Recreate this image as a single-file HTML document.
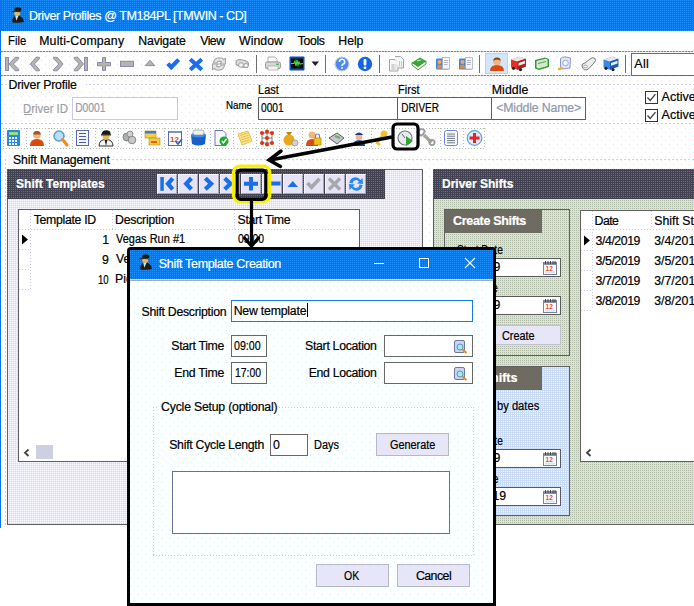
<!DOCTYPE html>
<html><head><meta charset="utf-8">
<style>
*{margin:0;padding:0;box-sizing:border-box}
html,body{width:694px;height:606px;overflow:hidden;font-family:"Liberation Sans",sans-serif;font-size:12px;color:#000}
html{background:#fff}
body{position:relative}
.dots{background:conic-gradient(from 270deg at 1px 1px,#cff2f8 25%,transparent 0) 0 0/8px 8px,conic-gradient(from 270deg at 1px 1px,#cff2f8 25%,transparent 0) 4px 4px/8px 8px,#fff}
.a{position:absolute}
.t{position:absolute;white-space:nowrap;line-height:1;-webkit-text-stroke:0.2px currentColor}
svg{position:absolute;overflow:visible}
</style></head><body>
<div class="a dots" style="left:1px;top:52px;width:693px;height:476px"></div>
<div class="a" style="left:0px;top:0px;width:694px;height:31px;background:conic-gradient(from 270deg at 1px 1px,#1e8ffd 25%,#0a72ef 0) 0 0/2px 2px"></div>
<div class="a" style="left:0px;top:0px;width:1px;height:528px;background:#0a74f0"></div>
<svg style="left:11px;top:7px" width="14" height="17" viewBox="0 0 14 17"><path d="M1.3 15.5 Q0.8 9 6 8.5 Q12.5 9 12.8 15 Q9 16.3 1.3 15.5 Z" fill="#1c1c12"/><path d="M4.2 8.8 L7.5 8.8 L5.3 13.8 Z" fill="#e0e0f0"/><ellipse cx="6.2" cy="6.3" rx="2.9" ry="2.6" fill="#e6b860"/><ellipse cx="6.8" cy="2.6" rx="3.6" ry="2.4" fill="#1e1e16"/><path d="M0.4 4.2 Q4 3 9.8 4.6 L9.8 5.2 Q5 4.6 0.9 5.3 Z" fill="#30302a"/></svg>
<div class="t" style="left:29.00px;top:10.00px;font-size:12.5px;letter-spacing:-0.426px;color:#fff;">Driver Profiles @ TM184PL [TMWIN - CD]</div>
<div class="t" style="left:7.50px;top:35.00px;font-size:12.3px;transform:scaleX(0.9170);transform-origin:1.00px 0;color:#000;">File</div>
<div class="t" style="left:39.20px;top:35.00px;font-size:12.3px;letter-spacing:0.180px;color:#000;">Multi-Company</div>
<div class="t" style="left:138.30px;top:35.00px;font-size:12.3px;letter-spacing:-0.142px;color:#000;">Navigate</div>
<div class="t" style="left:200.20px;top:35.00px;font-size:12.3px;letter-spacing:-0.517px;color:#000;">View</div>
<div class="t" style="left:239.00px;top:35.00px;font-size:12.3px;letter-spacing:0.029px;color:#000;">Window</div>
<div class="t" style="left:297.80px;top:35.00px;font-size:12.3px;letter-spacing:-0.389px;color:#000;">Tools</div>
<div class="t" style="left:338.30px;top:35.00px;font-size:12.3px;letter-spacing:-0.050px;color:#000;">Help</div>
<div class="a" style="left:1px;top:51px;width:693px;height:1px;background:repeating-linear-gradient(90deg,#80808e 0 2px,#d0d0d8 2px 3px)"></div>
<div class="a" style="left:1px;top:75px;width:693px;height:1px;background:repeating-linear-gradient(90deg,#80808e 0 2px,#d0d0d8 2px 3px)"></div>
<div class="a" style="left:256px;top:55px;width:1px;height:18px;background:#6e6e6e"></div>
<div class="a" style="left:325px;top:55px;width:1px;height:18px;background:#6e6e6e"></div>
<div class="a" style="left:379px;top:55px;width:1px;height:18px;background:#6e6e6e"></div>
<div class="a" style="left:479px;top:55px;width:1px;height:18px;background:#6e6e6e"></div>
<div class="a" style="left:625px;top:55px;width:1px;height:18px;background:#6e6e6e"></div>
<svg style="left:0;top:0" width="694" height="100"><g fill="#b6b6a6" stroke="#8a8ab6" stroke-width="1"><rect x="5.5" y="57.5" width="3" height="13"/><path d="M9 64 L15.2 57.3 L18.7 57.3 L18.7 58.8 L13.3 64 L18.7 69.2 L18.7 70.7 L15.2 70.7 Z"/><path d="M30.3 64 L36 57.3 L39.4 57.3 L39.4 58.8 L34.3 64 L39.4 69.6 L39.4 70.8 L36 70.8 Z"/><path d="M63 64 L57.3 57.3 L53.6 57.3 L53.6 58.8 L58.8 64 L53.6 69.6 L53.6 70.8 L57.3 70.8 Z"/><path d="M83.5 64 L77.8 57.3 L74.3 57.3 L74.3 58.8 L79.3 64 L74.3 69.6 L74.3 70.8 L77.8 70.8 Z"/><rect x="84.5" y="57.5" width="3" height="13"/><path d="M102.5 57.5 H105.5 V62.5 H110.5 V65.8 H105.5 V70.5 H102.5 V65.8 H97.5 V62.5 H102.5 Z"/><rect x="120.5" y="61.3" width="13" height="5.2"/><path d="M145.3 65.6 L150 60.2 L154.7 65.6 Z"/></g></svg>
<svg style="left:0;top:0" width="694" height="100"><path d="M167.8 63.6 L171.3 67.3 L178.6 59.6" stroke="#1c6eee" stroke-width="4.2" fill="none"/><path d="M190.2 59.2 L201.8 69.8 M201.8 59.2 L190.2 69.8" stroke="#1c6eee" stroke-width="4"/></svg>
<svg style="left:0;top:0" width="694" height="100"><path d="M213.5 63 Q214 58 219.5 57.8 Q222.5 57.8 223.5 59.5 L225.5 58.5 L225.5 64 L219.8 64 L221.5 62 Q220 60.8 218.5 61.2 Q217 62 217 63 Z" fill="#e4e4ee" stroke="#a4a49a" stroke-width="1.1"/><path d="M224.5 65 Q224 70 218.5 70.2 Q215.5 70.2 214.5 68.5 L212.5 69.5 L212.5 64 L218.2 64 L216.5 66 Q218 67.2 219.5 66.8 Q221 66 221 65 Z" fill="#e4e4ee" stroke="#a4a49a" stroke-width="1.1"/><path d="M236 62.5 Q236 59.5 240 59.5 L245 60.5 Q249 62 248.5 65 Q247.5 68 244 67.5 L239 66 Q235.5 65 236 62.5 Z" fill="#dcdce6" stroke="#a0a098" stroke-width="1.1"/><ellipse cx="241" cy="65" rx="2.5" ry="2.2" fill="#f4f4f8" stroke="#9c9c94" stroke-width="0.9"/><ellipse cx="246" cy="65.5" rx="2.3" ry="2" fill="#f4f4f8" stroke="#9c9c94" stroke-width="0.9"/></svg>
<svg style="left:265px;top:56px;" width="16" height="15" viewBox="0 0 16 15"><path d="M3 1 H10 L12 3 V6 H3 Z" fill="#fff" stroke="#9a9a9a" stroke-width="0.8"/><rect x="0.5" y="6" width="15" height="6.5" rx="1.5" fill="#d8d8d8" stroke="#8a8a8a" stroke-width="0.8"/><rect x="3" y="10" width="10" height="4" fill="#f4f4f4" stroke="#9a9a9a" stroke-width="0.6"/><rect x="11" y="7.5" width="3" height="1.5" fill="#5fb45f"/></svg>
<svg style="left:289px;top:56px;" width="16" height="15" viewBox="0 0 16 15"><rect x="0.5" y="0.5" width="15" height="14" fill="#0e4fb0" rx="1"/><rect x="2" y="2.5" width="12" height="10" fill="#050a05"/><path d="M2 7.5 L5 7.5 L6 5 L7 10 L8 4 L9 9 L10 6 L11 8 L14 7.5" stroke="#3be03b" stroke-width="1.2" fill="none"/></svg>
<svg style="left:311px;top:61px;" width="9" height="6" viewBox="0 0 9 6"><path d="M0.5 0.5 H8 L4.25 5 Z" fill="#202020"/></svg>
<svg style="left:334px;top:56px;" width="40" height="16" viewBox="0 0 40 16"><circle cx="8" cy="8" r="7" fill="#4a8ae8" stroke="#c8d0e0" stroke-width="1.2"/><path d="M5.5 6 A2.6 2.6 0 1 1 8.8 8.3 Q8 8.8 8 10" stroke="#fff" stroke-width="1.6" fill="none"/><circle cx="8" cy="12" r="0.9" fill="#fff"/><circle cx="31" cy="8" r="7.2" fill="#1565e0"/><rect x="29.6" y="3" width="2.8" height="6.5" rx="1" fill="#fff"/><circle cx="31" cy="11.8" r="1.4" fill="#fff"/></svg>
<svg style="left:0;top:0" width="694" height="100"><path d="M389.5 59.5 H395 L398 62.5 V71 H389.5 Z" fill="#f8f8f8" stroke="#9a9aa4" stroke-width="0.9"/><path d="M395 56.5 H400.5 L403.5 59.5 V68 H398" fill="#f4f4f4" stroke="#9a9aa4" stroke-width="0.9"/><path d="M391 65 H396.5 M391 67 H396.5 M391 69 H396.5 M393 64 V70" stroke="#b0b0b8" stroke-width="0.6"/><path d="M399.5 61 V66.5 M401.5 61 V66.5" stroke="#a8a8b0" stroke-width="0.6"/><path d="M412 62.5 L420 57.5 L426 61 L418 66.5 Z" fill="#38a838"/><path d="M412 62.5 L412 65 L418 69.8 L426 64 L426 61 L418 66.5 Z" fill="#f4f4f0" stroke="#208020" stroke-width="0.8"/><path d="M417 61 L421 60" stroke="#c8f0c8" stroke-width="1"/><g transform="translate(435.5,0)"><rect x="0.5" y="58.5" width="13" height="11" rx="1" fill="#3a88e6"/><rect x="7" y="57.5" width="7" height="11.5" fill="#f4f6fa" stroke="#a0a8b8" stroke-width="0.7"/><path d="M8.5 60.5 H12.5 M8.5 62.5 H12.5 M8.5 64.5 H12" stroke="#9098a8" stroke-width="0.7"/><circle cx="4" cy="62" r="2" fill="#f4a868"/><path d="M1.2 68.5 Q1.5 64.5 4 64.5 Q6.5 64.5 6.8 68.5 Z" fill="#f08830"/></g><g transform="translate(458.5,0)"><rect x="0.5" y="58.5" width="13" height="11" rx="1" fill="#3a88e6"/><rect x="7" y="57.5" width="7" height="11.5" fill="#f4f6fa" stroke="#a0a8b8" stroke-width="0.7"/><path d="M8.5 60.5 H12.5 M8.5 62.5 H12.5 M8.5 64.5 H12" stroke="#9098a8" stroke-width="0.7"/><circle cx="4" cy="62" r="2" fill="#f4a868"/><path d="M1.2 68.5 Q1.5 64.5 4 64.5 Q6.5 64.5 6.8 68.5 Z" fill="#f08830"/></g></svg>
<div class="a" style="left:485px;top:53px;width:23px;height:21px;background:#cfe6fb;border:1px solid #b4d4f4"></div>
<svg style="left:489px;top:56px;" width="16" height="16" viewBox="0 0 16 16"><path d="M1 15 Q1 9 8 9 Q15 9 15 15 Z" fill="#d84a10"/><circle cx="8" cy="5.5" r="3.8" fill="#f2b47c"/><path d="M4.2 5 Q4.5 1.5 8 1.6 Q11.5 1.5 11.8 5 Q10 3.6 8 3.8 Q6 3.6 4.2 5 Z" fill="#8a4a1a"/></svg>
<svg style="left:0;top:0" width="694" height="100"><g transform="translate(510.5,0)"><path d="M0.5 59.5 L9 56.8 L15.3 58.8 L15.3 66.5 L7 69.8 L0.5 67.5 Z" fill="#e03028"/><path d="M0.5 59.5 L9 56.8 L15.3 58.8 L7 61.5 Z" fill="#e8e8ea"/><path d="M7 61.5 L15.3 58.8 L15.3 66.5 L7 69.8 Z" fill="#b81a14"/><path d="M8 63 L14.5 60.8 L14.5 63.5 L8 65.8 Z" fill="#e8eef8"/><circle cx="3" cy="68.3" r="1.6" fill="#222"/><circle cx="10" cy="69.6" r="1.6" fill="#222"/></g><path d="M535 60 L545 57.5 L549 59 L549 67 L539 70 L535 68.5 Z" fill="#30a030"/><path d="M536.5 61 L545.5 58.8 L547.5 59.6 L547.5 66 L538.5 68.5 L536.5 67.5 Z" fill="#d8e8d0"/><path d="M538 63.5 L546 61.5" stroke="#60a060" stroke-width="1.2"/><path d="M560.5 58.5 Q562 56.5 566 57 L570.5 58 L570 68 L562 69 L560.5 67 Z" fill="#e0e6fa" stroke="#8090c8" stroke-width="0.9"/><circle cx="565.5" cy="63" r="2.8" fill="#f4f6ff" stroke="#8a9ad0" stroke-width="0.8"/><path d="M558.5 69.5 L563 68" stroke="#e8a020" stroke-width="1.8"/><circle cx="559" cy="69" r="1.3" fill="#f0b030"/><path d="M582 66 Q581.5 63.5 585 63 L590 59 Q593 56.5 595 58.5 Q596.5 60.5 594 63 L589 68.5 Q587 70.5 584.5 69.8 Q582.5 69 582 66 Z" fill="#ececec" stroke="#7a7a7a" stroke-width="1"/><ellipse cx="585.5" cy="66.5" rx="1.8" ry="1.3" fill="#fff" stroke="#888" stroke-width="0.7"/><g transform="translate(603,0)"><path d="M0.5 59.5 L9 56.8 L15.3 58.8 L15.3 66.5 L7 69.8 L0.5 67.5 Z" fill="#3a86e0"/><path d="M0.5 59.5 L9 56.8 L15.3 58.8 L7 61.5 Z" fill="#e8e8ea"/><path d="M7 61.5 L15.3 58.8 L15.3 66.5 L7 69.8 Z" fill="#1a5ab8"/><path d="M8 63 L14.5 60.8 L14.5 63.5 L8 65.8 Z" fill="#e8eef8"/><circle cx="3" cy="68.3" r="1.6" fill="#222"/><circle cx="10" cy="69.6" r="1.6" fill="#222"/></g></svg>
<div class="a" style="left:631px;top:53px;width:70px;height:23px;background:#fff;border:1px solid #6a6a6a"></div>
<div class="t" style="left:634.30px;top:58.00px;font-size:12.5px;letter-spacing:0.293px;color:#000;">All</div>
<div class="a" style="left:1px;top:84px;width:693px;height:1px;background:repeating-linear-gradient(90deg,#cdcdf4 0 2px,transparent 2px 4px)"></div>
<div class="a" style="left:1px;top:123px;width:693px;height:1px;background:repeating-linear-gradient(90deg,#cdcdf4 0 2px,transparent 2px 4px)"></div>
<div class="a" style="left:6px;top:76px;width:80px;height:14px;background:#fff"></div>
<div class="t" style="left:8.50px;top:79.00px;font-size:12.3px;letter-spacing:-0.209px;color:#000;">Driver Profile</div>
<div class="t" style="left:23.20px;top:103.00px;font-size:12.3px;transform:scaleX(0.9260);transform-origin:1.00px 0;color:#a0a0a0;">Driver ID</div>
<div class="a" style="left:24px;top:114px;width:8px;height:1px;background:#a0a0a0"></div>
<div class="a" style="left:72px;top:97px;width:106px;height:23px;background:#fff;border:1px solid #c8c8ee"></div>
<div class="t" style="left:74.80px;top:102.00px;font-size:12.3px;transform:scaleX(0.8390);transform-origin:1.00px 0;color:#9a9aa8;">D0001</div>
<div class="t" style="left:225.50px;top:100.00px;font-size:11.3px;transform:scaleX(0.8643);transform-origin:0.00px 0;color:#000;">Name</div>
<div class="t" style="left:257.60px;top:84.00px;font-size:12.3px;transform:scaleX(0.8937);transform-origin:1.00px 0;color:#000;">Last</div>
<div class="t" style="left:397.70px;top:84.00px;font-size:12.3px;transform:scaleX(0.8984);transform-origin:1.00px 0;color:#000;">First</div>
<div class="t" style="left:491.80px;top:84.00px;font-size:12.3px;letter-spacing:0.083px;color:#000;">Middle</div>
<div class="a" style="left:258px;top:97px;width:140px;height:23px;background:#fff;border:1px solid #5e5e5e"></div>
<div class="a" style="left:397px;top:97px;width:95px;height:23px;background:#fff;border:1px solid #5e5e5e"></div>
<div class="a" style="left:491px;top:97px;width:95px;height:23px;background:#fff;border:1px solid #5e5e5e"></div>
<div class="t" style="left:261.40px;top:102.00px;font-size:12.3px;transform:scaleX(0.8286);transform-origin:0.00px 0;color:#000;">0001</div>
<div class="t" style="left:400.80px;top:102.00px;font-size:12.3px;transform:scaleX(0.8117);transform-origin:1.00px 0;color:#000;">DRIVER</div>
<div class="t" style="left:496.20px;top:102.00px;font-size:12.3px;letter-spacing:-0.152px;color:#8c98ac;">&lt;Middle Name&gt;</div>
<div class="a" style="left:645px;top:91px;width:13px;height:13px;background:#fff;border:1px solid #333"></div>
<svg style="left:645px;top:91px;" width="13" height="13" viewBox="0 0 13 13"><path d="M2.5 6.5 L5.2 9.5 L10.5 3.2" stroke="#404048" stroke-width="1.3" fill="none"/></svg>
<div class="a" style="left:645px;top:109px;width:13px;height:13px;background:#fff;border:1px solid #333"></div>
<svg style="left:645px;top:109px;" width="13" height="13" viewBox="0 0 13 13"><path d="M2.5 6.5 L5.2 9.5 L10.5 3.2" stroke="#404048" stroke-width="1.3" fill="none"/></svg>
<div class="t" style="left:661.60px;top:91.00px;font-size:12.5px;color:#000;">Active</div>
<div class="t" style="left:661.60px;top:109.00px;font-size:12.5px;color:#000;">Active</div>
<div class="a" style="left:3px;top:128px;width:481px;height:1px;background:repeating-linear-gradient(90deg,#b4c0b4 0 1px,transparent 1px 3px)"></div>
<div class="a" style="left:3px;top:148px;width:481px;height:1px;background:repeating-linear-gradient(90deg,#b4c0b4 0 1px,transparent 1px 3px)"></div>
<div class="a" style="left:3px;top:128px;width:1px;height:21px;background:repeating-linear-gradient(180deg,#b4c0b4 0 1px,transparent 1px 3px)"></div>
<div class="a" style="left:26px;top:128px;width:1px;height:21px;background:repeating-linear-gradient(180deg,#b4c0b4 0 1px,transparent 1px 3px)"></div>
<div class="a" style="left:49px;top:128px;width:1px;height:21px;background:repeating-linear-gradient(180deg,#b4c0b4 0 1px,transparent 1px 3px)"></div>
<div class="a" style="left:72px;top:128px;width:1px;height:21px;background:repeating-linear-gradient(180deg,#b4c0b4 0 1px,transparent 1px 3px)"></div>
<div class="a" style="left:95px;top:128px;width:1px;height:21px;background:repeating-linear-gradient(180deg,#b4c0b4 0 1px,transparent 1px 3px)"></div>
<div class="a" style="left:118px;top:128px;width:1px;height:21px;background:repeating-linear-gradient(180deg,#b4c0b4 0 1px,transparent 1px 3px)"></div>
<div class="a" style="left:141px;top:128px;width:1px;height:21px;background:repeating-linear-gradient(180deg,#b4c0b4 0 1px,transparent 1px 3px)"></div>
<div class="a" style="left:164px;top:128px;width:1px;height:21px;background:repeating-linear-gradient(180deg,#b4c0b4 0 1px,transparent 1px 3px)"></div>
<div class="a" style="left:187px;top:128px;width:1px;height:21px;background:repeating-linear-gradient(180deg,#b4c0b4 0 1px,transparent 1px 3px)"></div>
<div class="a" style="left:210px;top:128px;width:1px;height:21px;background:repeating-linear-gradient(180deg,#b4c0b4 0 1px,transparent 1px 3px)"></div>
<div class="a" style="left:233px;top:128px;width:1px;height:21px;background:repeating-linear-gradient(180deg,#b4c0b4 0 1px,transparent 1px 3px)"></div>
<div class="a" style="left:256px;top:128px;width:1px;height:21px;background:repeating-linear-gradient(180deg,#b4c0b4 0 1px,transparent 1px 3px)"></div>
<div class="a" style="left:279px;top:128px;width:1px;height:21px;background:repeating-linear-gradient(180deg,#b4c0b4 0 1px,transparent 1px 3px)"></div>
<div class="a" style="left:302px;top:128px;width:1px;height:21px;background:repeating-linear-gradient(180deg,#b4c0b4 0 1px,transparent 1px 3px)"></div>
<div class="a" style="left:325px;top:128px;width:1px;height:21px;background:repeating-linear-gradient(180deg,#b4c0b4 0 1px,transparent 1px 3px)"></div>
<div class="a" style="left:348px;top:128px;width:1px;height:21px;background:repeating-linear-gradient(180deg,#b4c0b4 0 1px,transparent 1px 3px)"></div>
<div class="a" style="left:371px;top:128px;width:1px;height:21px;background:repeating-linear-gradient(180deg,#b4c0b4 0 1px,transparent 1px 3px)"></div>
<div class="a" style="left:394px;top:128px;width:1px;height:21px;background:repeating-linear-gradient(180deg,#b4c0b4 0 1px,transparent 1px 3px)"></div>
<div class="a" style="left:417px;top:128px;width:1px;height:21px;background:repeating-linear-gradient(180deg,#b4c0b4 0 1px,transparent 1px 3px)"></div>
<div class="a" style="left:440px;top:128px;width:1px;height:21px;background:repeating-linear-gradient(180deg,#b4c0b4 0 1px,transparent 1px 3px)"></div>
<div class="a" style="left:463px;top:128px;width:1px;height:21px;background:repeating-linear-gradient(180deg,#b4c0b4 0 1px,transparent 1px 3px)"></div>
<div class="a" style="left:484px;top:128px;width:1px;height:21px;background:repeating-linear-gradient(180deg,#b4c0b4 0 1px,transparent 1px 3px)"></div>
<svg style="left:0;top:0" width="694" height="606"><rect x="7" y="130" width="13" height="16" rx="1" fill="#2a88e0"/><rect x="9" y="132" width="9" height="3" fill="#9ae070"/><rect x="9" y="137" width="2" height="2" fill="#e8f4ff"/><rect x="12" y="137" width="2" height="2" fill="#e8f4ff"/><rect x="15" y="137" width="2" height="2" fill="#e8f4ff"/><rect x="9" y="140" width="2" height="2" fill="#e8f4ff"/><rect x="12" y="140" width="2" height="2" fill="#e8f4ff"/><rect x="15" y="140" width="2" height="2" fill="#e8f4ff"/><rect x="9" y="143" width="2" height="2" fill="#e8f4ff"/><rect x="12" y="143" width="2" height="2" fill="#e8f4ff"/><rect x="15" y="143" width="2" height="2" fill="#e8f4ff"/><path d="M30 146 Q30 139 37 139 Q44 139 44 146 Z" fill="#d84a10"/><circle cx="37" cy="135" r="3.8" fill="#f2b47c"/><path d="M33.2 134.5 Q33.5 131 37 131.1 Q40.5 131 40.8 134.5 Z" fill="#9a5a2a"/><circle cx="59" cy="136" r="5" fill="#b8e0f8" stroke="#5a9ad8" stroke-width="1.5"/><path d="M62.5 139.5 L67 145" stroke="#f08a20" stroke-width="3" stroke-linecap="round"/><rect x="76.5" y="130.5" width="12" height="15" fill="#f4f6fc" stroke="#5a6ab0" stroke-width="1"/><rect x="79" y="133" width="7" height="1" fill="#4a5aa0"/><rect x="79" y="136" width="7" height="1" fill="#4a5aa0"/><rect x="79" y="139" width="7" height="1" fill="#4a5aa0"/><rect x="79" y="142" width="7" height="1" fill="#4a5aa0"/><path d="M99 146 Q99 139.5 106 139.5 Q113 139.5 113 146 Z" fill="#f4f4f4" stroke="#303030" stroke-width="1"/><path d="M104.5 139.5 L106 146 L107.5 139.5 Z" fill="#202020"/><ellipse cx="106" cy="136.5" rx="3.4" ry="3.6" fill="#e8b858"/><path d="M101.5 134.5 Q102 130 107 130.3 Q111 130.8 110.5 134.5 Z" fill="#1a1a14"/><rect x="101" y="134" width="10" height="1.5" fill="#3a3a30"/><circle cx="127" cy="137" r="4" fill="#b0b0b0" stroke="#707070" stroke-width="0.8"/><circle cx="132" cy="140" r="3.8" fill="#c8c8c8" stroke="#707070" stroke-width="0.8"/><circle cx="130" cy="134" r="3" fill="#d0d0d0" stroke="#808080" stroke-width="0.8"/><rect x="145" y="131" width="11" height="7" fill="#f8d040" stroke="#b08a20" stroke-width="0.6"/><rect x="145" y="131" width="11" height="2.5" fill="#3a7ad8"/><rect x="149" y="138" width="11" height="7" fill="#f8c848" stroke="#b08a20" stroke-width="0.6"/><rect x="151" y="141" width="6" height="2" fill="#e86020"/><rect x="168.5" y="131.5" width="13" height="14" fill="#fff" stroke="#5a6ab0" stroke-width="1"/><rect x="169" y="131" width="12" height="2" fill="#8090c0"/><text x="170" y="142" font-size="8" font-weight="bold" fill="#e84010" font-family="Liberation Sans">12</text><path d="M176 142 L178 144 L182 139" stroke="#2060c0" stroke-width="1.6" fill="none"/><path d="M191 135 L206 135 L205 144 Q198.5 147 192 144 Z" fill="#1860c8"/><ellipse cx="198.5" cy="135" rx="7.5" ry="2.5" fill="#3a90e8"/><rect x="193" y="130" width="11" height="5" rx="2" fill="#f0f0f0" stroke="#888" stroke-width="0.6"/><path d="M215 130.5 H223 L226 133.5 V145.5 H215 Z" fill="#f8f8fc" stroke="#5a6ab0" stroke-width="0.9"/><circle cx="224" cy="141" r="4.5" fill="#20a830"/><path d="M221.8 141 L223.5 142.8 L226.5 139" stroke="#fff" stroke-width="1.5" fill="none"/><path d="M238 134 L248 131 L252 141 L242 145 Z" fill="#fce890" stroke="#e8b830" stroke-width="0.9"/><path d="M240.0 135.5 L248.0 133.0" stroke="#e0a820" stroke-width="0.7"/><path d="M240.6 137.7 L248.6 135.2" stroke="#e0a820" stroke-width="0.7"/><path d="M241.2 139.9 L249.2 137.4" stroke="#e0a820" stroke-width="0.7"/><path d="M241.8 142.1 L249.8 139.6" stroke="#e0a820" stroke-width="0.7"/><path d="M262 133 L272 133 L272 143 L262 143 Z M267 131 L267 145 M262 138 L272 138" stroke="#707070" stroke-width="0.9" fill="none"/><circle cx="262" cy="133" r="2" fill="#e03010"/><circle cx="272" cy="133" r="2" fill="#e03010"/><circle cx="262" cy="143" r="2" fill="#e03010"/><circle cx="272" cy="143" r="2" fill="#e03010"/><circle cx="267" cy="131.5" r="2" fill="#e03010"/><circle cx="267" cy="138" r="2" fill="#e03010"/><circle cx="267" cy="144.5" r="2" fill="#e03010"/><circle cx="289" cy="140" r="5.5" fill="#e8a818"/><path d="M286 132 L292 132 L290 135 L288 135 Z" fill="#c88808"/><circle cx="295" cy="143" r="3" fill="#d0d0d0" stroke="#909090" stroke-width="0.7"/><path d="M306 146 Q306 139 312 139 Q318 139 318 146 Z" fill="#d84a10"/><circle cx="312" cy="135" r="3.5" fill="#f2b47c"/><rect x="314" y="138" width="7" height="7" fill="#f0c020" stroke="#b08810" stroke-width="0.7"/><path d="M315.5 138 V136 A2 2 0 0 1 319.5 136 V138" stroke="#808080" stroke-width="1.2" fill="none"/><path d="M329 138 L337 133 L344 138 L337 144 Z" fill="#c8c8c8" stroke="#606060" stroke-width="1"/><path d="M335 136 L340 138" stroke="#60b060" stroke-width="2"/><path d="M353 146 Q353 140 359 140 Q365 140 365 146 Z" fill="#1a48b0"/><circle cx="359" cy="137" r="3.3" fill="#f0b880"/><path d="M354.5 135 Q359 130 363.5 135 Z" fill="#1a3a90"/><circle cx="384" cy="134" r="3.5" fill="#f0c030"/><path d="M382 136 L377 143 L380 145" stroke="#f0c030" stroke-width="2.4" fill="none"/><circle cx="405" cy="138" r="7" fill="#e8eaf0" stroke="#707880" stroke-width="1.2"/><path d="M405 138 L402 134" stroke="#606870" stroke-width="1"/><path d="M406 136 L413 141 L406 146 Z" fill="#30a830"/><path d="M424 135 L431.5 142.5" stroke="#a4a49c" stroke-width="3.2"/><path d="M424.8 131.5 A3.2 3.2 0 1 0 421 135.5 L423 134.5 L424 132.5 Z" fill="none" stroke="#9a9aa8" stroke-width="1.8"/><circle cx="432" cy="142.5" r="2.6" fill="none" stroke="#9a9aa0" stroke-width="1.8"/><rect x="444.5" y="130.5" width="13" height="15" rx="2" fill="#f8faff" stroke="#6a88d8" stroke-width="1"/><rect x="447" y="133.5" width="8" height="1" fill="#707888"/><rect x="447" y="135.7" width="8" height="1" fill="#707888"/><rect x="447" y="137.9" width="8" height="1" fill="#707888"/><rect x="447" y="140.1" width="8" height="1" fill="#707888"/><rect x="447" y="142.3" width="8" height="1" fill="#707888"/><circle cx="474.5" cy="138" r="7.3" fill="#d8ecfc" stroke="#60a0e0" stroke-width="1.2"/><path d="M473 133 H476 V136.5 H479.5 V139.5 H476 V143 H473 V139.5 H469.5 V136.5 H473 Z" fill="#e82020"/></svg>
<div class="t" style="left:13.00px;top:154.00px;font-size:12.3px;letter-spacing:-0.199px;color:#000;">Shift Management</div>
<div class="a" style="left:112px;top:159px;width:582px;height:1px;background:repeating-linear-gradient(90deg,#cdcdf4 0 2px,transparent 2px 4px)"></div>
<div class="a" style="left:5px;top:159px;width:1px;height:366px;background:repeating-linear-gradient(180deg,#cdcdf4 0 2px,transparent 2px 4px)"></div>
<div class="a" style="left:7px;top:169px;width:416px;height:356px;background:conic-gradient(from 0deg at 1px 1px,#d6f8fc 0 25%,#dad2f8 0 50%,#d6f8fc 0 75%,#f6f6ff 0) 0 0/2px 2px;border:1px solid #606060"></div>
<div class="a" style="left:7px;top:169px;width:378px;height:30px;background:conic-gradient(from 270deg at 1px 1px,#707052 25%,#424252 0) 0 0/2px 2px"></div>
<div class="t" style="left:16.10px;top:178.00px;font-size:12px;font-weight:bold;color:#fff;">Shift Templates</div>
<div class="a" style="left:157px;top:174px;width:20px;height:20px;background:#e4e4f6;border:1px solid #f4f4ff;border-right-color:#a8a8b8;border-bottom-color:#a8a8b8"></div>
<div class="a" style="left:178px;top:174px;width:20px;height:20px;background:#e4e4f6;border:1px solid #f4f4ff;border-right-color:#a8a8b8;border-bottom-color:#a8a8b8"></div>
<div class="a" style="left:199px;top:174px;width:20px;height:20px;background:#e4e4f6;border:1px solid #f4f4ff;border-right-color:#a8a8b8;border-bottom-color:#a8a8b8"></div>
<div class="a" style="left:220px;top:174px;width:20px;height:20px;background:#e4e4f6;border:1px solid #f4f4ff;border-right-color:#a8a8b8;border-bottom-color:#a8a8b8"></div>
<div class="a" style="left:241px;top:174px;width:20px;height:20px;background:#e4e4f6;border:1px solid #f4f4ff;border-right-color:#a8a8b8;border-bottom-color:#a8a8b8"></div>
<div class="a" style="left:262px;top:174px;width:20px;height:20px;background:#e4e4f6;border:1px solid #f4f4ff;border-right-color:#a8a8b8;border-bottom-color:#a8a8b8"></div>
<div class="a" style="left:283px;top:174px;width:20px;height:20px;background:#e4e4f6;border:1px solid #f4f4ff;border-right-color:#a8a8b8;border-bottom-color:#a8a8b8"></div>
<div class="a" style="left:304px;top:174px;width:20px;height:20px;background:#e4e4f6;border:1px solid #f4f4ff;border-right-color:#a8a8b8;border-bottom-color:#a8a8b8"></div>
<div class="a" style="left:325px;top:174px;width:20px;height:20px;background:#e4e4f6;border:1px solid #f4f4ff;border-right-color:#a8a8b8;border-bottom-color:#a8a8b8"></div>
<div class="a" style="left:346px;top:174px;width:20px;height:20px;background:#e4e4f6;border:1px solid #f4f4ff;border-right-color:#a8a8b8;border-bottom-color:#a8a8b8"></div>
<svg style="left:0;top:0" width="694" height="606"><g fill="#1a6ee8"><rect x="160.3" y="177" width="3.5" height="13.8"/><path d="M172.7 178.3 L168.0 183.8 L172.7 189.3" stroke="#1a6ee8" stroke-width="4.2" fill="none"/><path d="M191.4 178.3 L186.2 183.8 L191.4 189.3" stroke="#1a6ee8" stroke-width="4.2" fill="none"/><path d="M205.3 178.3 L211.1 183.8 L205.3 189.3" stroke="#1a6ee8" stroke-width="4.2" fill="none"/><path d="M224.7 178.3 L230.5 183.8 L224.7 189.3" stroke="#1a6ee8" stroke-width="4.2" fill="none"/><path d="M249 177 H253 V181.8 H258 V185.8 H253 V190.6 H249 V185.8 H244 V181.8 H249 Z"/><rect x="270.5" y="181.5" width="10" height="4"/><path d="M287.5 187 L292.8 181 L298 187 Z"/></g><path d="M307.5 183 L311.5 187.3 L319.5 178.8" stroke="#a8a8ac" stroke-width="3.6" fill="none"/><path d="M329 178.5 L340 189.5 M340 178.5 L329 189.5" stroke="#a8a8ac" stroke-width="3.4" fill="none"/><path d="M349.5 183 A6 6 0 0 1 360.5 180 L362.5 178 L363 184 L357 183.5 L359 181.8 A3.5 3.5 0 0 0 352.5 183.5 Z" fill="#2a8ae8"/><path d="M362.5 185 A6 6 0 0 1 351.5 188 L349.5 190 L349 184 L355 184.5 L353 186.2 A3.5 3.5 0 0 0 359.5 184.5 Z" fill="#2a8ae8"/></svg>
<div class="a" style="left:18px;top:209px;width:342px;height:253px;background:#fff;border:1px solid #606060"></div>
<div class="a" style="left:19px;top:229px;width:340px;height:1px;background:repeating-linear-gradient(90deg,#c8c8f0 0 1px,transparent 1px 3px)"></div>
<div class="a" style="left:19px;top:249px;width:11px;height:1px;background:repeating-linear-gradient(90deg,#c8c8f0 0 1px,transparent 1px 3px)"></div>
<div class="a" style="left:19px;top:269px;width:11px;height:1px;background:repeating-linear-gradient(90deg,#c8c8f0 0 1px,transparent 1px 3px)"></div>
<div class="a" style="left:19px;top:289px;width:11px;height:1px;background:repeating-linear-gradient(90deg,#c8c8f0 0 1px,transparent 1px 3px)"></div>
<div class="a" style="left:30px;top:210px;width:1px;height:80px;background:repeating-linear-gradient(180deg,#c8c8f0 0 1px,transparent 1px 3px)"></div>
<div class="a" style="left:112px;top:210px;width:1px;height:19px;background:repeating-linear-gradient(180deg,#c8c8f0 0 1px,transparent 1px 3px)"></div>
<div class="a" style="left:234px;top:210px;width:1px;height:19px;background:repeating-linear-gradient(180deg,#c8c8f0 0 1px,transparent 1px 3px)"></div>
<div class="t" style="left:33.70px;top:214.00px;font-size:12.3px;letter-spacing:-0.313px;color:#000;">Template ID</div>
<div class="t" style="left:115.00px;top:214.00px;font-size:12.3px;letter-spacing:-0.227px;color:#000;">Description</div>
<div class="t" style="left:237.50px;top:214.00px;font-size:12.3px;letter-spacing:-0.324px;color:#000;">Start Time</div>
<svg style="left:21px;top:234px;" width="8" height="12" viewBox="0 0 8 12"><path d="M1 0.5 L7 5.5 L1 10.5 Z" fill="#000"/></svg>
<div class="t" style="left:102.20px;top:234.00px;font-size:12.3px;color:#000;">1</div>
<div class="t" style="left:102.00px;top:254.00px;font-size:12.3px;color:#000;">9</div>
<div class="t" style="left:98.20px;top:274.00px;font-size:12.3px;transform:scaleX(0.7804);transform-origin:0.00px 0;color:#000;">10</div>
<div class="t" style="left:116.00px;top:233.00px;font-size:12.3px;transform:scaleX(0.8951);transform-origin:0.00px 0;color:#000;">Vegas Run #1</div>
<div class="t" style="left:116.00px;top:253.00px;font-size:12.3px;color:#000;">Vegas</div>
<div class="t" style="left:115.00px;top:273.00px;font-size:12.3px;color:#000;">Pickup</div>
<div class="t" style="left:237.50px;top:233.00px;font-size:12.3px;transform:scaleX(0.8470);transform-origin:0.00px 0;color:#000;">09:00</div>
<svg style="left:23px;top:449px;" width="8" height="8" viewBox="0 0 8 8"><path d="M5.5 0.5 L2 3.7 L5.5 7" stroke="#404040" stroke-width="1.8" fill="none"/></svg>
<div class="a" style="left:36px;top:445px;width:17px;height:14px;background:#cdd0e2"></div>
<div class="a" style="left:433px;top:169px;width:262px;height:356px;background:conic-gradient(from 270deg at 1px 1px,#b0bca8 25%,#dcdaf8 0) 0 0/2px 2px;border:1px solid #606060;border-right:none"></div>
<div class="a" style="left:433px;top:169px;width:261px;height:30px;background:conic-gradient(from 270deg at 1px 1px,#707052 25%,#424252 0) 0 0/2px 2px"></div>
<div class="t" style="left:442.00px;top:178.00px;font-size:12px;font-weight:bold;color:#fff;">Driver Shifts</div>
<div class="a" style="left:444px;top:209px;width:126px;height:147px;border:1px solid #606060"></div>
<div class="a" style="left:445px;top:210px;width:97px;height:23px;background:#6e6c62"></div>
<div class="t" style="left:453.10px;top:215.00px;font-size:12.5px;font-weight:bold;letter-spacing:-0.329px;color:#fff;">Create Shifts</div>
<div class="t" style="left:456.50px;top:244.00px;font-size:12.3px;transform:scaleX(0.8285);transform-origin:0.00px 0;color:#000;">Start Date</div>
<div class="a" style="left:452px;top:258px;width:109px;height:19px;background:#fff;border:1px solid #5a5a5a"></div>
<div class="t" style="left:452.47px;top:261.00px;font-size:12.3px;color:#000;">3/4/2019</div>
<div class="t" style="left:455.50px;top:282.00px;font-size:12.3px;transform:scaleX(0.8130);transform-origin:1.00px 0;color:#000;">End Date</div>
<div class="a" style="left:452px;top:296px;width:109px;height:19px;background:#fff;border:1px solid #5a5a5a"></div>
<div class="t" style="left:452.47px;top:299.00px;font-size:12.3px;color:#000;">3/8/2019</div>
<div class="a" style="left:452px;top:325px;width:109px;height:20px;background:#e6e6f8;border:1px solid #c0c0d0"></div>
<div class="t" style="left:501.80px;top:330.00px;font-size:12.3px;transform:scaleX(0.8848);transform-origin:0.00px 0;color:#000;">Create</div>
<svg style="left:543px;top:261px" width="14" height="14" viewBox="0 0 14 14"><rect x="0.5" y="1.5" width="13" height="12" fill="#fff" stroke="#7a80a0" stroke-width="1"/><rect x="1" y="1" width="12" height="3" fill="#8a90a0"/><path d="M2.5 0 V3 M5 0 V3 M7.5 0 V3 M10 0 V3 M12 0 V3" stroke="#303840" stroke-width="0.9"/><text x="2.6" y="10" font-size="6.5" font-weight="bold" fill="#f04a10" font-family="Liberation Sans">12</text><rect x="2" y="10.5" width="10" height="2" fill="#c8ecf8"/></svg>
<svg style="left:543px;top:299px" width="14" height="14" viewBox="0 0 14 14"><rect x="0.5" y="1.5" width="13" height="12" fill="#fff" stroke="#7a80a0" stroke-width="1"/><rect x="1" y="1" width="12" height="3" fill="#8a90a0"/><path d="M2.5 0 V3 M5 0 V3 M7.5 0 V3 M10 0 V3 M12 0 V3" stroke="#303840" stroke-width="0.9"/><text x="2.6" y="10" font-size="6.5" font-weight="bold" fill="#f04a10" font-family="Liberation Sans">12</text><rect x="2" y="10.5" width="10" height="2" fill="#c8ecf8"/></svg>
<div class="a" style="left:444px;top:366px;width:126px;height:150px;background:conic-gradient(from 270deg at 1px 1px,#eef6ff 25%,#c8dcfa 0) 0 0/2px 2px;border:1px solid #606060"></div>
<div class="a" style="left:445px;top:367px;width:97px;height:23px;background:#6e6c62"></div>
<div class="t" style="left:447.99px;top:372.00px;font-size:12.5px;font-weight:bold;color:#fff;">Clear Shifts</div>
<div class="t" style="left:497.20px;top:400.00px;font-size:12.3px;transform:scaleX(0.9086);transform-origin:0.00px 0;color:#000;">by dates</div>
<div class="t" style="left:456.50px;top:435.00px;font-size:12.3px;transform:scaleX(0.8285);transform-origin:0.00px 0;color:#000;">Start Date</div>
<div class="a" style="left:452px;top:449px;width:109px;height:19px;background:#fff;border:1px solid #5a5a5a"></div>
<div class="t" style="left:452.47px;top:452.00px;font-size:12.3px;color:#000;">3/4/2019</div>
<div class="t" style="left:455.50px;top:473.00px;font-size:12.3px;transform:scaleX(0.8229);transform-origin:1.00px 0;color:#000;">End Date</div>
<div class="a" style="left:452px;top:487px;width:109px;height:19px;background:#fff;border:1px solid #5a5a5a"></div>
<div class="t" style="left:451.43px;top:490.00px;font-size:12.3px;color:#000;">3/10/2019</div>
<svg style="left:543px;top:452px" width="14" height="14" viewBox="0 0 14 14"><rect x="0.5" y="1.5" width="13" height="12" fill="#fff" stroke="#7a80a0" stroke-width="1"/><rect x="1" y="1" width="12" height="3" fill="#8a90a0"/><path d="M2.5 0 V3 M5 0 V3 M7.5 0 V3 M10 0 V3 M12 0 V3" stroke="#303840" stroke-width="0.9"/><text x="2.6" y="10" font-size="6.5" font-weight="bold" fill="#f04a10" font-family="Liberation Sans">12</text><rect x="2" y="10.5" width="10" height="2" fill="#c8ecf8"/></svg>
<svg style="left:543px;top:490px" width="14" height="14" viewBox="0 0 14 14"><rect x="0.5" y="1.5" width="13" height="12" fill="#fff" stroke="#7a80a0" stroke-width="1"/><rect x="1" y="1" width="12" height="3" fill="#8a90a0"/><path d="M2.5 0 V3 M5 0 V3 M7.5 0 V3 M10 0 V3 M12 0 V3" stroke="#303840" stroke-width="0.9"/><text x="2.6" y="10" font-size="6.5" font-weight="bold" fill="#f04a10" font-family="Liberation Sans">12</text><rect x="2" y="10.5" width="10" height="2" fill="#c8ecf8"/></svg>
<div class="a" style="left:580px;top:210px;width:115px;height:252px;background:#fff;border:1px solid #606060;border-right:none"></div>
<div class="a" style="left:581px;top:229px;width:113px;height:1px;background:repeating-linear-gradient(90deg,#c8c8f0 0 1px,transparent 1px 3px)"></div>
<div class="a" style="left:581px;top:250px;width:11px;height:1px;background:repeating-linear-gradient(90deg,#c8c8f0 0 1px,transparent 1px 3px)"></div>
<div class="a" style="left:581px;top:270px;width:11px;height:1px;background:repeating-linear-gradient(90deg,#c8c8f0 0 1px,transparent 1px 3px)"></div>
<div class="a" style="left:581px;top:290px;width:11px;height:1px;background:repeating-linear-gradient(90deg,#c8c8f0 0 1px,transparent 1px 3px)"></div>
<div class="a" style="left:581px;top:310px;width:11px;height:1px;background:repeating-linear-gradient(90deg,#c8c8f0 0 1px,transparent 1px 3px)"></div>
<div class="a" style="left:592px;top:211px;width:1px;height:99px;background:repeating-linear-gradient(180deg,#c8c8f0 0 1px,transparent 1px 3px)"></div>
<div class="a" style="left:651px;top:211px;width:1px;height:18px;background:repeating-linear-gradient(180deg,#c8c8f0 0 1px,transparent 1px 3px)"></div>
<div class="t" style="left:594.60px;top:215.00px;font-size:12.3px;letter-spacing:-0.579px;color:#000;">Date</div>
<div class="t" style="left:654.20px;top:215.00px;font-size:12.3px;color:#000;">Shift Start</div>
<svg style="left:583px;top:235px;" width="8" height="12" viewBox="0 0 8 12"><path d="M1 0.5 L7 5.5 L1 10.5 Z" fill="#000"/></svg>
<div class="t" style="left:595.60px;top:235.00px;font-size:12.3px;letter-spacing:-0.433px;color:#000;">3/4/2019</div>
<div class="t" style="left:654.20px;top:235.00px;font-size:12.3px;color:#000;">3/4/2019</div>
<div class="t" style="left:595.60px;top:255.00px;font-size:12.3px;letter-spacing:-0.433px;color:#000;">3/5/2019</div>
<div class="t" style="left:654.20px;top:255.00px;font-size:12.3px;color:#000;">3/5/2019</div>
<div class="t" style="left:595.60px;top:275.00px;font-size:12.3px;letter-spacing:-0.433px;color:#000;">3/7/2019</div>
<div class="t" style="left:654.20px;top:275.00px;font-size:12.3px;color:#000;">3/7/2019</div>
<div class="t" style="left:595.60px;top:295.00px;font-size:12.3px;letter-spacing:-0.433px;color:#000;">3/8/2019</div>
<div class="t" style="left:654.20px;top:295.00px;font-size:12.3px;color:#000;">3/8/2019</div>
<svg style="left:585px;top:449px;" width="8" height="8" viewBox="0 0 8 8"><path d="M5.5 0.5 L2 3.7 L5.5 7" stroke="#404040" stroke-width="1.8" fill="none"/></svg>
<div class="a" style="left:127px;top:247px;width:369px;height:359px;background:#000;border-radius:4px 4px 0 0"></div>
<div class="a dots" style="left:130px;top:250px;width:363px;height:353px"></div>
<div class="a" style="left:130px;top:250px;width:363px;height:29px;background:conic-gradient(from 270deg at 1px 1px,#1e8ffd 25%,#0a72ef 0) 0 0/2px 2px"></div>
<div class="a" style="left:130px;top:279px;width:363px;height:1px;background:#d8d8d8"></div>
<div class="a" style="left:130px;top:280px;width:363px;height:1px;background:#a8a8b0"></div>
<svg style="left:139px;top:254px" width="14" height="17" viewBox="0 0 14 17"><path d="M1.3 15.5 Q0.8 9 6 8.5 Q12.5 9 12.8 15 Q9 16.3 1.3 15.5 Z" fill="#1c1c12"/><path d="M4.2 8.8 L7.5 8.8 L5.3 13.8 Z" fill="#e0e0f0"/><ellipse cx="6.2" cy="6.3" rx="2.9" ry="2.6" fill="#e6b860"/><ellipse cx="6.8" cy="2.6" rx="3.6" ry="2.4" fill="#1e1e16"/><path d="M0.4 4.2 Q4 3 9.8 4.6 L9.8 5.2 Q5 4.6 0.9 5.3 Z" fill="#30302a"/></svg>
<div class="t" style="left:158.80px;top:258.00px;font-size:12.5px;letter-spacing:-0.326px;color:#fff;">Shift Template Creation</div>
<svg style="left:374px;top:258px;" width="102" height="12" viewBox="0 0 102 12"><path d="M0 5.5 H10" stroke="#fff" stroke-width="1"/><rect x="45.5" y="0.5" width="9" height="9" fill="none" stroke="#fff" stroke-width="1"/><path d="M91 0 L101 10 M101 0 L91 10" stroke="#fff" stroke-width="1.1"/></svg>
<div class="t" style="left:141.50px;top:306.00px;font-size:12.3px;letter-spacing:-0.281px;color:#000;">Shift Description</div>
<div class="a" style="left:231px;top:300px;width:242px;height:22px;background:#fff;border:1px solid #1a78e0"></div>
<div class="t" style="left:233.70px;top:305.00px;font-size:12.3px;letter-spacing:-0.213px;color:#000;">New template</div>
<div class="a" style="left:307px;top:303px;width:1px;height:14px;background:#000"></div>
<div class="t" style="left:171.30px;top:340.00px;font-size:12.3px;letter-spacing:-0.335px;color:#000;">Start Time</div>
<div class="t" style="left:174.30px;top:367.00px;font-size:12.3px;letter-spacing:-0.275px;color:#000;">End Time</div>
<div class="a" style="left:231px;top:335px;width:36px;height:22px;background:#fff;border:1px solid #686868"></div>
<div class="a" style="left:231px;top:362px;width:36px;height:22px;background:#fff;border:1px solid #686868"></div>
<div class="t" style="left:234.20px;top:340.00px;font-size:12.3px;transform:scaleX(0.8664);transform-origin:0.00px 0;color:#000;">09:00</div>
<div class="t" style="left:234.80px;top:367.00px;font-size:12.3px;transform:scaleX(0.8470);transform-origin:0.00px 0;color:#000;">17:00</div>
<div class="t" style="left:305.10px;top:340.00px;font-size:12.3px;letter-spacing:-0.311px;color:#000;">Start Location</div>
<div class="t" style="left:308.70px;top:367.00px;font-size:12.3px;letter-spacing:-0.332px;color:#000;">End Location</div>
<div class="a" style="left:384px;top:335px;width:89px;height:22px;background:#fff;border:1px solid #686868"></div>
<div class="a" style="left:384px;top:362px;width:89px;height:22px;background:#fff;border:1px solid #686868"></div>
<svg style="left:454px;top:340px" width="14" height="14" viewBox="0 0 14 14"><rect x="0.5" y="0.5" width="10" height="12" rx="1.5" fill="#c8d4f0" stroke="#6a78a8" stroke-width="1"/><circle cx="6" cy="7" r="3" fill="#a8e8f0" stroke="#5080a0" stroke-width="0.8"/><path d="M8.5 9.5 L12.5 13" stroke="#e08a20" stroke-width="1.8"/></svg>
<svg style="left:454px;top:367px" width="14" height="14" viewBox="0 0 14 14"><rect x="0.5" y="0.5" width="10" height="12" rx="1.5" fill="#c8d4f0" stroke="#6a78a8" stroke-width="1"/><circle cx="6" cy="7" r="3" fill="#a8e8f0" stroke="#5080a0" stroke-width="0.8"/><path d="M8.5 9.5 L12.5 13" stroke="#e08a20" stroke-width="1.8"/></svg>
<div class="a" style="left:153px;top:407px;width:6px;height:1px;background:repeating-linear-gradient(90deg,#c8c8f0 0 1px,transparent 1px 3px)"></div>
<div class="a" style="left:279px;top:407px;width:195px;height:1px;background:repeating-linear-gradient(90deg,#c8c8f0 0 1px,transparent 1px 3px)"></div>
<div class="a" style="left:153px;top:555px;width:321px;height:1px;background:repeating-linear-gradient(90deg,#c8c8f0 0 1px,transparent 1px 3px)"></div>
<div class="a" style="left:153px;top:407px;width:1px;height:149px;background:repeating-linear-gradient(180deg,#c8c8f0 0 1px,transparent 1px 3px)"></div>
<div class="a" style="left:473px;top:407px;width:1px;height:149px;background:repeating-linear-gradient(180deg,#c8c8f0 0 1px,transparent 1px 3px)"></div>
<div class="t" style="left:161.10px;top:401.00px;font-size:12.3px;letter-spacing:-0.218px;color:#000;">Cycle Setup (optional)</div>
<div class="t" style="left:169.20px;top:439.00px;font-size:12.3px;letter-spacing:-0.274px;color:#000;">Shift Cycle Length</div>
<div class="a" style="left:270px;top:434px;width:38px;height:22px;background:#fff;border:1px solid #686868"></div>
<div class="t" style="left:273.00px;top:439.00px;font-size:12.3px;color:#000;">0</div>
<div class="t" style="left:313.70px;top:439.00px;font-size:12.3px;transform:scaleX(0.8895);transform-origin:1.00px 0;color:#000;">Days</div>
<div class="a" style="left:376px;top:433px;width:73px;height:23px;background:#e6e6f8;border:1px solid #b8b8c4"></div>
<div class="t" style="left:390.00px;top:439.00px;font-size:12.3px;transform:scaleX(0.8847);transform-origin:0.00px 0;color:#000;">Generate</div>
<div class="a" style="left:172px;top:471px;width:278px;height:63px;background:#fff;border:1px solid #6a6e98"></div>
<div class="a" style="left:316px;top:564px;width:73px;height:23px;background:#e6e6f8;border:1px solid #b8b8c4"></div>
<div class="a" style="left:397px;top:564px;width:73px;height:23px;background:#e6e6f8;border:1px solid #b8b8c4"></div>
<div class="t" style="left:344.30px;top:570.00px;font-size:12.3px;transform:scaleX(0.8565);transform-origin:0.00px 0;color:#000;">OK</div>
<div class="t" style="left:415.90px;top:570.00px;font-size:12.3px;letter-spacing:-0.509px;color:#000;">Cancel</div>
<svg style="left:0;top:0" width="694" height="606"><rect x="393" y="124" width="25" height="25" rx="4" fill="none" stroke="#000" stroke-width="3.2"/><path d="M392 137 L270 160" stroke="#000" stroke-width="3.5"/><path d="M281 151 L269 160 L280.5 166.5" stroke="#000" stroke-width="3.5" fill="none" stroke-linecap="round"/><rect x="233.5" y="166.2" width="36.2" height="35.3" rx="6" fill="none" stroke="#f8f000" stroke-width="3.2"/><rect x="237.2" y="170.1" width="28.6" height="29.2" rx="3.5" fill="none" stroke="#000" stroke-width="3.2"/><path d="M251.5 200 L251.5 246" stroke="#000" stroke-width="3.2"/><path d="M244.5 238 L251.5 246 L258.5 238" stroke="#000" stroke-width="3.2" fill="none" stroke-linecap="round"/></svg>
</body></html>
